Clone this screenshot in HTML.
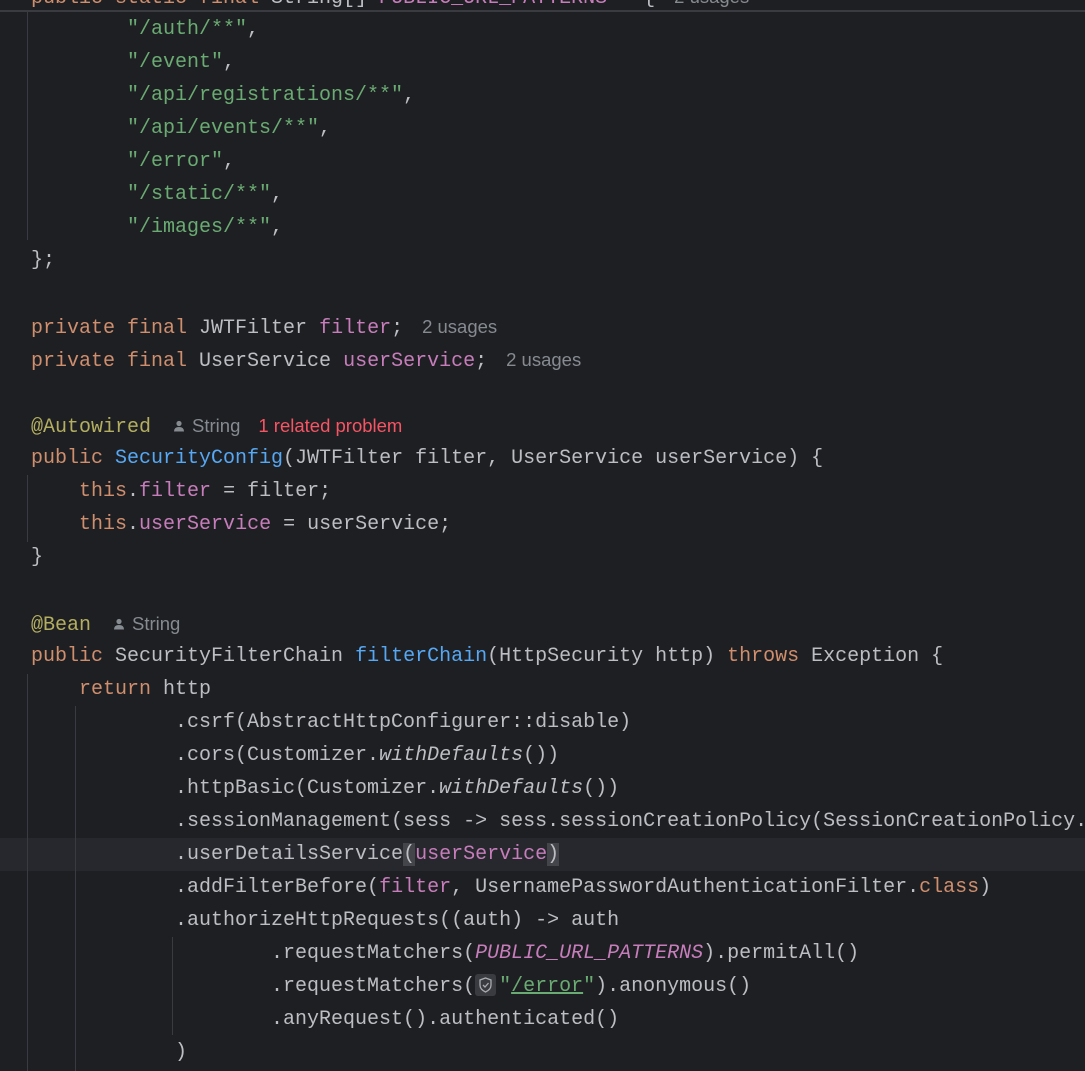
<!DOCTYPE html>
<html><head><meta charset="utf-8"><style>
html,body{margin:0;padding:0;background:#1e1f22;width:1085px;height:1071px;overflow:hidden;position:relative}
.l{position:absolute;left:31px;height:33px;line-height:33px;font-family:"Liberation Mono",monospace;font-size:20px;color:#bcbec4;white-space:pre}
.k{color:#cf8e6d}.s{color:#6aab73}.f{color:#c77dbb}.m{color:#56a8f5}.a{color:#b3ae60}.i{font-style:italic}
.h{font-family:"Liberation Sans",sans-serif;font-size:18.5px;color:#868a91;margin-left:19px}
.r{font-family:"Liberation Sans",sans-serif;font-size:18.5px;color:#f75464;margin-left:18px}
.g{position:absolute;width:1px;background:#393b40}
.b{background:#43454a}
.u{display:inline-block;width:12px;height:12px;vertical-align:0px;margin-right:7px}
</style></head><body>
<div style="position:absolute;left:0;top:838px;width:1085px;height:33px;background:#26282e"></div>
<div class="g" style="left:27px;top:12px;height:228px"></div>
<div class="g" style="left:27px;top:475px;height:67px"></div>
<div class="g" style="left:27px;top:674px;height:397px"></div>
<div class="g" style="left:75px;top:706px;height:365px"></div>
<div class="g" style="left:172px;top:937px;height:98px"></div>

<div class="l" style="top:-20px"><span class="k">public static final </span>String[] <span class="f">PUBLIC_URL_PATTERNS</span> = {<span class="h">2 usages</span></div>
<div style="position:absolute;left:0;top:10px;width:1085px;height:2px;background:#393b40"></div>
<div class="l" style="top:13px">        <span class="s">"/auth/**"</span>,</div>
<div class="l" style="top:46px">        <span class="s">"/event"</span>,</div>
<div class="l" style="top:79px">        <span class="s">"/api/registrations/**"</span>,</div>
<div class="l" style="top:112px">        <span class="s">"/api/events/**"</span>,</div>
<div class="l" style="top:145px">        <span class="s">"/error"</span>,</div>
<div class="l" style="top:178px">        <span class="s">"/static/**"</span>,</div>
<div class="l" style="top:211px">        <span class="s">"/images/**"</span>,</div>
<div class="l" style="top:244px">};</div>
<div class="l" style="top:310px"><span class="k">private final </span>JWTFilter <span class="f">filter</span>;<span class="h">2 usages</span></div>
<div class="l" style="top:343px"><span class="k">private final </span>UserService <span class="f">userService</span>;<span class="h">2 usages</span></div>
<div class="l" style="top:409px"><span class="a">@Autowired</span><span class="h" style="margin-left:22px"><svg class="u" viewBox="0 0 11 12"><circle cx="5.5" cy="3.5" r="2.6" fill="#868a91"/><path d="M0.5 11.5 Q0.5 7 5.5 7 Q10.5 7 10.5 11.5Z" fill="#868a91"/></svg>String</span><span class="r">1 related problem</span></div>
<div class="l" style="top:442px"><span class="k">public </span><span class="m">SecurityConfig</span>(JWTFilter filter, UserService userService) {</div>
<div class="l" style="top:475px">    <span class="k">this</span>.<span class="f">filter</span> = filter;</div>
<div class="l" style="top:508px">    <span class="k">this</span>.<span class="f">userService</span> = userService;</div>
<div class="l" style="top:541px">}</div>
<div class="l" style="top:607px"><span class="a">@Bean</span><span class="h" style="margin-left:22px"><svg class="u" viewBox="0 0 11 12"><circle cx="5.5" cy="3.5" r="2.6" fill="#868a91"/><path d="M0.5 11.5 Q0.5 7 5.5 7 Q10.5 7 10.5 11.5Z" fill="#868a91"/></svg>String</span></div>
<div class="l" style="top:640px"><span class="k">public </span>SecurityFilterChain <span class="m">filterChain</span>(HttpSecurity http) <span class="k">throws </span>Exception {</div>
<div class="l" style="top:673px">    <span class="k">return </span>http</div>
<div class="l" style="top:706px">            .csrf(AbstractHttpConfigurer::disable)</div>
<div class="l" style="top:739px">            .cors(Customizer.<span class="i">withDefaults</span>())</div>
<div class="l" style="top:772px">            .httpBasic(Customizer.<span class="i">withDefaults</span>())</div>
<div class="l" style="top:805px">            .sessionManagement(sess -&gt; sess.sessionCreationPolicy(SessionCreationPolicy.</div>
<div class="l" style="top:838px">            .userDetailsService<span class="b">(</span><span class="f">userService</span><span class="b">)</span></div>
<div class="l" style="top:871px">            .addFilterBefore(<span class="f">filter</span>, UsernamePasswordAuthenticationFilter.<span class="k">class</span>)</div>
<div class="l" style="top:904px">            .authorizeHttpRequests((auth) -&gt; auth</div>
<div class="l" style="top:937px">                    .requestMatchers(<span class="f i">PUBLIC_URL_PATTERNS</span>).permitAll()</div>
<div class="l" style="top:970px">                    .requestMatchers(<span style="display:inline-block;width:21px;height:22px;background:#393b40;border-radius:3px;vertical-align:-5px;margin-right:3px;position:relative"><svg width="21" height="22" viewBox="0 0 21 22" style="position:absolute;left:0;top:0"><path d="M10.5 4 L16 6 V11 Q16 15.5 10.5 18 Q5 15.5 5 11 V6Z" fill="none" stroke="#a8abb0" stroke-width="1.3"/><path d="M8 11 L10 13 L13.5 9" fill="none" stroke="#a8abb0" stroke-width="1.3"/></svg></span><span class="s">"<span style="text-decoration:underline">/error</span>"</span>).anonymous()</div>
<div class="l" style="top:1003px">                    .anyRequest().authenticated()</div>
<div class="l" style="top:1036px">            )</div>
</body></html>
